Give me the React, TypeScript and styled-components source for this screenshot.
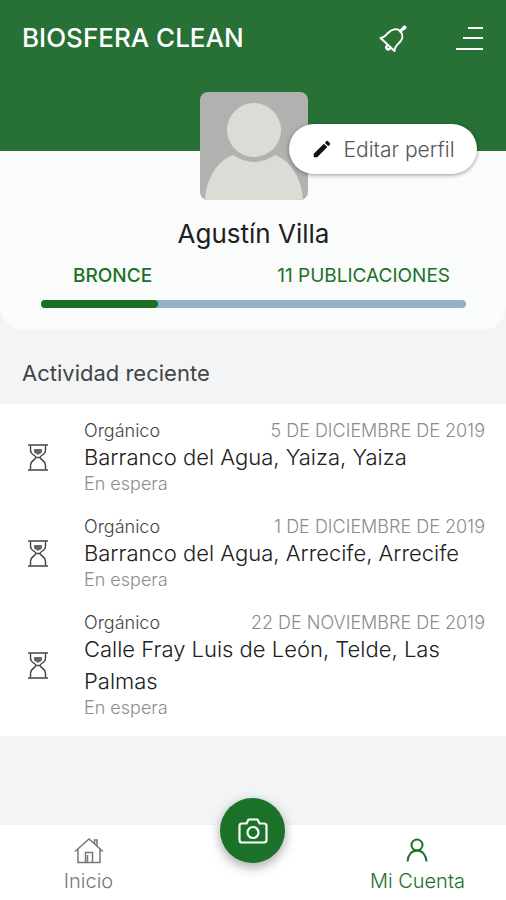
import React from "react";
import styled, { createGlobalStyle } from "styled-components";

const color = {
  header: "#287136",
  green: "#1b7128",
  card: "#fafbfb",
  page: "#f2f4f6",
  track: "#91b0c9",
  ink: "#202020",
  muted: "#8c8c8c",
};

const GlobalStyle = createGlobalStyle`
  *, *::before, *::after { box-sizing: border-box; }
  body { margin: 0; background: ${color.page}; }
  h1, h2, p, ul { margin: 0; padding: 0; }
  button { font: inherit; border: 0; padding: 0; background: none; cursor: pointer; }
`;

const Page = styled.div`
  min-height: 100vh;
  display: flex;
  flex-direction: column;
  background: ${color.page};
  color: ${color.ink};
  font-family: Inter, "Liberation Sans", sans-serif;
  font-weight: 300;
`;

const Header = styled.header`
  height: 151px;
  padding: 22px 23px 0 22px;
  display: flex;
  align-items: flex-start;
  justify-content: space-between;
  background: ${color.header};
  color: #fff;
`;

const Brand = styled.h1`
  font-size: 26px;
  line-height: 32px;
  font-weight: 500;
`;

const Tools = styled.div`
  display: flex;
  align-items: center;
  gap: 49px;
`;

const ToolButton = styled.button`
  display: flex;
  color: #fff;
`;

const Profile = styled.section`
  display: flex;
  flex-direction: column;
  align-items: center;
  padding: 0 40px 22px 41px;
  background: ${color.card};
  border-radius: 0 0 24px 24px;
`;

const AvatarWrap = styled.div`
  position: relative;
  width: 108px;
  height: 108px;
  margin-top: -59px;
`;

const Avatar = styled.svg`
  display: block;
  width: 100%;
  height: 100%;
  border-radius: 8px;
`;

const EditButton = styled.button`
  position: absolute;
  top: 32px;
  left: 89px;
  height: 50px;
  padding: 0 22px;
  display: flex;
  align-items: center;
  gap: 11px;
  border-radius: 25px;
  background: #fff;
  color: #555;
  font-size: 21px;
  white-space: nowrap;
  box-shadow: 0 1px 4px rgba(0, 0, 0, 0.4);
`;

const Name = styled.h2`
  margin-top: 18px;
  font-size: 26px;
  line-height: 32px;
  font-weight: 400;
`;

const Stats = styled.div`
  align-self: stretch;
  display: flex;
  justify-content: space-between;
  margin-top: 15px;
  padding: 0 16px 0 32px;
  font-size: 19px;
  line-height: 22px;
  color: ${color.green};
`;

const Level = styled.span`
  font-weight: 500;
`;

const Count = styled.span`
  font-weight: 400;
`;

const Progress = styled.div`
  align-self: stretch;
  height: 8px;
  margin-top: 13px;
  border-radius: 4px;
  background: ${color.track};
`;

const ProgressFill = styled.div`
  height: 100%;
  border-radius: 4px;
  background: ${color.green};
`;

const SectionTitle = styled.h2`
  padding: 29px 22px 17px;
  font-size: 22px;
  line-height: 28px;
  font-weight: 400;
  color: #444;
`;

const List = styled.ul`
  padding: 4px 0 8px;
  background: #fff;
  list-style: none;
`;

const Row = styled.li`
  display: flex;
  align-items: center;
  gap: 36px;
  padding: 13px 21px 9px 28px;
`;

const RowBody = styled.div`
  flex: 1;
  min-width: 0;
`;

const RowTop = styled.div`
  display: flex;
  justify-content: space-between;
  font-size: 18px;
  line-height: 20px;
`;

const Kind = styled.span`
  color: #444;
`;

const When = styled.time`
  color: ${color.muted};
`;

const Place = styled.p`
  font-size: 22px;
  line-height: 32px;
`;

const Status = styled.p`
  font-size: 18px;
  line-height: 22px;
  color: ${color.muted};
`;

const Nav = styled.nav`
  height: 75px;
  margin-top: auto;
  display: grid;
  grid-template-columns: 35fr 30fr 35fr;
  background: #fff;
`;

const NavLink = styled.a<{ $active?: boolean }>`
  display: flex;
  flex-direction: column;
  align-items: center;
  gap: 4px;
  padding-top: 12px;
  font-size: 20px;
  line-height: 24px;
  text-decoration: none;
  color: ${(p) => (p.$active ? color.green : "#777")};
`;

const CameraButton = styled.button`
  justify-self: center;
  margin-top: -27px;
  width: 65px;
  height: 65px;
  display: flex;
  align-items: center;
  justify-content: center;
  border-radius: 50%;
  background: ${color.green};
  color: #fff;
  box-shadow: 0 4px 12px rgba(0, 0, 0, 0.35);
`;

const BellIcon = () => (
  <svg width="28" height="32" viewBox="0 0 28 32" fill="none" stroke="currentColor" strokeWidth="2" strokeLinecap="round" strokeLinejoin="round" aria-hidden="true">
    <path d="M1.500 16C5 16 6.500 13.500 9 11C13 7 18 6 21 9C24.500 12.500 24 17 20.500 20.500C17.500 23.500 15.500 25 15.500 29Z" />
    <path d="M21.500 9L25.500 5.500" strokeWidth="3" />
    <circle cx="25.500" cy="5.500" r="1" />
    <path d="M8 23.500C6.500 25.500 7.500 27.500 9.500 27.500L11.500 26" strokeWidth="2.500" />
  </svg>
);

const MenuIcon = () => (
  <svg width="27" height="32" viewBox="0 0 27 32" stroke="currentColor" strokeWidth="2" aria-hidden="true">
    <path d="M12 6H27M7 16H27M0 27H27" />
  </svg>
);

const PencilIcon = () => (
  <svg width="22" height="22" viewBox="0 0 24 24" fill="#111" aria-hidden="true">
    <path d="M3 17.250V21h3.750L17.810 9.940l-3.750-3.750L3 17.250zM20.710 7.040a1 1 0 0 0 0-1.410l-2.340-2.340a1 1 0 0 0-1.410 0l-1.830 1.830 3.750 3.750 1.830-1.830z" />
  </svg>
);

const HourglassIcon = () => (
  <svg width="20" height="28" viewBox="0 0 20 28" fill="none" stroke="#444" strokeWidth="1.400" aria-hidden="true">
    <path d="M0 1H20M0 26H20" strokeWidth="1.600" />
    <path d="M2.500 1.500V6.500C2.500 10.500 8 11.500 8 13.500C8 15.500 2.500 16.500 2.500 21.500V25.500M17.500 1.500V6.500C17.500 10.500 12 11.500 12 13.500C12 15.500 17.500 16.500 17.500 21.500V25.500" />
    <path d="M8 13.500H12" />
    <path d="M6 5H14V7.500C14 9.500 11.500 9.500 10 11C8.500 9.500 6 9.500 6 7.500Z" fill="#666" stroke="none" />
  </svg>
);

const HomeIcon = () => (
  <svg width="30" height="28" viewBox="0 0 30 28" fill="none" stroke="currentColor" strokeWidth="1.500" aria-hidden="true">
    <path d="M1 14.500L15 2L29 14.500M4 12V25.500H26V12" />
    <path d="M20.500 7V3H23V9.500M11.500 25.500V15.500H18.500V25.500M13.500 25.500V18" />
  </svg>
);

const UserIcon = () => (
  <svg width="22" height="28" viewBox="0 0 22 28" fill="none" stroke="currentColor" strokeWidth="2" aria-hidden="true">
    <circle cx="11" cy="8" r="5.500" />
    <path d="M1.500 24.500C2 17.500 6 13.500 11 13.500S20 17.500 20.500 24.500" />
  </svg>
);

const CameraIcon = () => (
  <svg width="30" height="26" viewBox="0 0 30 26" fill="none" stroke="currentColor" strokeWidth="2.200" strokeLinejoin="round" aria-hidden="true">
    <path d="M4 5.500H8.500L10.500 1.500H19.500L21.500 5.500H26Q28.500 5.500 28.500 8V22Q28.500 24.500 26 24.500H4Q1.500 24.500 1.500 22V8Q1.500 5.500 4 5.500Z" />
    <circle cx="15" cy="14.500" r="5.500" />
  </svg>
);

const activity = [
  { kind: "Orgánico", iso: "2019-12-05", date: "5 DE DICIEMBRE DE 2019", place: "Barranco del Agua, Yaiza, Yaiza", status: "En espera" },
  { kind: "Orgánico", iso: "2019-12-01", date: "1 DE DICIEMBRE DE 2019", place: "Barranco del Agua, Arrecife, Arrecife", status: "En espera" },
  { kind: "Orgánico", iso: "2019-11-22", date: "22 DE NOVIEMBRE DE 2019", place: "Calle Fray Luis de León, Telde, Las Palmas", status: "En espera" },
];

const progress = 27.5;

export default function App() {
  return (
    <Page>
      <GlobalStyle />
      <Header>
        <Brand>BIOSFERA CLEAN</Brand>
        <Tools>
          <ToolButton aria-label="Notificaciones"><BellIcon /></ToolButton>
          <ToolButton aria-label="Menú"><MenuIcon /></ToolButton>
        </Tools>
      </Header>

      <Profile>
        <AvatarWrap>
          <Avatar viewBox="0 0 108 108" role="img" aria-label="Foto de perfil">
            <rect width="108" height="108" fill="#b0b2af" />
            <path d="M5 108C6 87 17 69 33 63Q54 77 75 63C91 69 102 87 103 108Z" fill="#dcdbd5" />
            <circle cx="54" cy="38" r="27" fill="#dcdbd5" />
          </Avatar>
          <EditButton>
            <PencilIcon />
            Editar perfil
          </EditButton>
        </AvatarWrap>
        <Name>Agustín Villa</Name>
        <Stats>
          <Level>BRONCE</Level>
          <Count>11 PUBLICACIONES</Count>
        </Stats>
        <Progress role="progressbar" aria-label="Nivel" aria-valuenow={progress} aria-valuemin={0} aria-valuemax={100}>
          <ProgressFill style={{ width: `${progress}%` }} />
        </Progress>
      </Profile>

      <SectionTitle>Actividad reciente</SectionTitle>
      <List>
        {activity.map((item) => (
          <Row key={item.iso}>
            <HourglassIcon />
            <RowBody>
              <RowTop>
                <Kind>{item.kind}</Kind>
                <When dateTime={item.iso}>{item.date}</When>
              </RowTop>
              <Place>{item.place}</Place>
              <Status>{item.status}</Status>
            </RowBody>
          </Row>
        ))}
      </List>

      <Nav>
        <NavLink href="#inicio"><HomeIcon />Inicio</NavLink>
        <CameraButton aria-label="Cámara"><CameraIcon /></CameraButton>
        <NavLink href="#cuenta" $active aria-current="page"><UserIcon />Mi Cuenta</NavLink>
      </Nav>
    </Page>
  );
}
